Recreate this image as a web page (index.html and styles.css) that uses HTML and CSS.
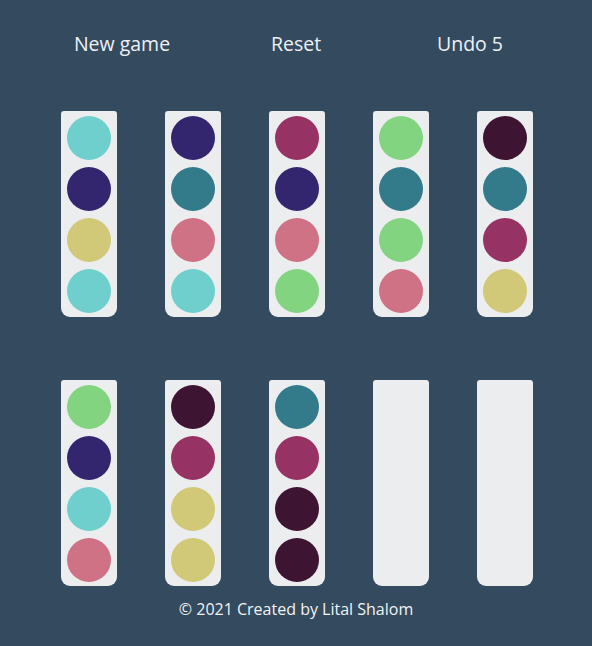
FILE: index.html
```html
<!DOCTYPE html>
<html>
<head>
<meta charset="utf-8">
<link rel="stylesheet" href="styles.css">
</head>
<body>
<div class="app">
  <nav class="controls">
    <button class="btn">New game</button>
    <button class="btn">Reset</button>
    <button class="btn">Undo 5</button>
  </nav>
  <main class="board">
    <div class="tube"><span class="ball cyan"></span><span class="ball navy"></span><span class="ball yellow"></span><span class="ball cyan"></span></div>
    <div class="tube"><span class="ball navy"></span><span class="ball teal"></span><span class="ball pink"></span><span class="ball cyan"></span></div>
    <div class="tube"><span class="ball magenta"></span><span class="ball navy"></span><span class="ball pink"></span><span class="ball green"></span></div>
    <div class="tube"><span class="ball green"></span><span class="ball teal"></span><span class="ball green"></span><span class="ball pink"></span></div>
    <div class="tube"><span class="ball plum"></span><span class="ball teal"></span><span class="ball magenta"></span><span class="ball yellow"></span></div>
    <div class="tube"><span class="ball green"></span><span class="ball navy"></span><span class="ball cyan"></span><span class="ball pink"></span></div>
    <div class="tube"><span class="ball plum"></span><span class="ball magenta"></span><span class="ball yellow"></span><span class="ball yellow"></span></div>
    <div class="tube"><span class="ball teal"></span><span class="ball magenta"></span><span class="ball plum"></span><span class="ball plum"></span></div>
    <div class="tube"></div>
    <div class="tube"></div>
  </main>
  <footer class="footer">© 2021 Created by Lital Shalom</footer>
</div>
</body>
</html>
```

FILE: styles.css
```css
html, body {
  margin: 0;
  padding: 0;
  background: #344a5e;
}
.app {
  width: 592px;
  height: 646px;
  font-family: "Open Sans", "DejaVu Sans", sans-serif;
  color: #f1f3f5;
}
.controls {
  display: grid;
  grid-template-columns: 174px 174px 174px;
  justify-content: center;
  padding-top: 29px;
  height: 29px;
}
.btn {
  background: none;
  border: none;
  color: #eef1f4;
  font-family: inherit;
  font-size: 19.5px;
  line-height: 28px;
  padding: 0;
  margin: 0;
}
.board {
  display: grid;
  grid-template-columns: repeat(5, 56px);
  column-gap: 48px;
  row-gap: 63px;
  justify-content: center;
  padding-left: 2px;
  margin-top: 53px;
}
.tube {
  width: 56px;
  height: 206px;
  box-sizing: border-box;
  background: #ecedef;
  border-radius: 3px 3px 9px 9px;
  padding: 5px 6px 0;
  display: flex;
  flex-direction: column;
  gap: 7px;
}
.ball {
  width: 44px;
  height: 44px;
  border-radius: 50%;
  display: block;
}
.cyan { background: #6ecfcc; }
.navy { background: #33266f; }
.yellow { background: #d1c978; }
.teal { background: #337b8b; }
.pink { background: #cf7286; }
.green { background: #83d480; }
.plum { background: #3d1431; }
.magenta { background: #963264; }
.footer {
  text-align: center;
  font-size: 16px;
  line-height: 20px;
  margin-top: 13px;
  color: #f1f3f5;
}
```
